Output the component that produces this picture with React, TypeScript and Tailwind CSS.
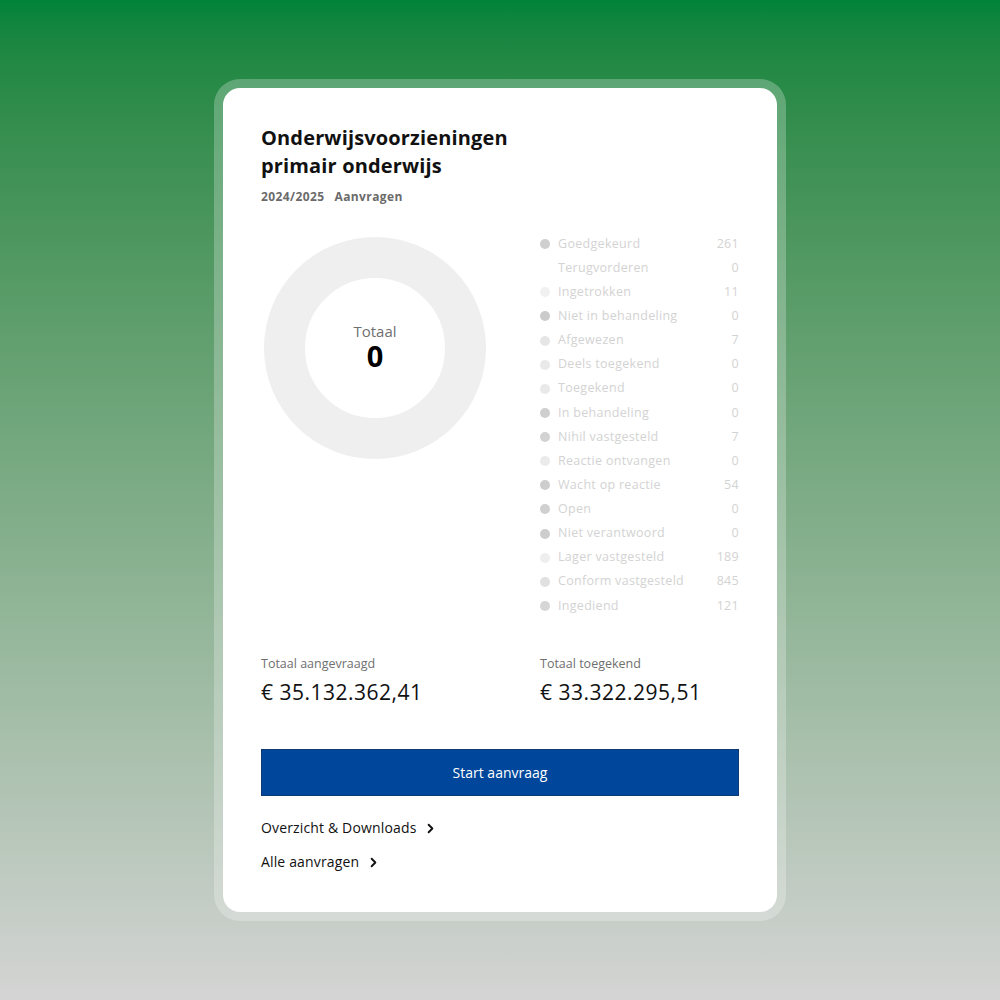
import React from "react";
import { ChevronRight } from "lucide-react";

const legend = [
  { label: "Goedgekeurd", value: 261, dot: "bg-[#cfcfcf]" },
  { label: "Terugvorderen", value: 0, dot: "bg-white" },
  { label: "Ingetrokken", value: 11, dot: "bg-[#f1f1f1]" },
  { label: "Niet in behandeling", value: 0, dot: "bg-[#cbcbcb]" },
  { label: "Afgewezen", value: 7, dot: "bg-[#e6e6e6]" },
  { label: "Deels toegekend", value: 0, dot: "bg-[#e9e9e9]" },
  { label: "Toegekend", value: 0, dot: "bg-[#e9e9e9]" },
  { label: "In behandeling", value: 0, dot: "bg-[#cecece]" },
  { label: "Nihil vastgesteld", value: 7, dot: "bg-[#d2d2d2]" },
  { label: "Reactie ontvangen", value: 0, dot: "bg-[#ebebeb]" },
  { label: "Wacht op reactie", value: 54, dot: "bg-[#cdcdcd]" },
  { label: "Open", value: 0, dot: "bg-[#d0d0d0]" },
  { label: "Niet verantwoord", value: 0, dot: "bg-[#cdcdcd]" },
  { label: "Lager vastgesteld", value: 189, dot: "bg-[#eeeeee]" },
  { label: "Conform vastgesteld", value: 845, dot: "bg-[#e0e0e0]" },
  { label: "Ingediend", value: 121, dot: "bg-[#d6d6d6]" },
];

const Donut: React.FC = () => (
  <div className="relative w-[222px] h-[222px] ml-[3px] mt-[5px]">
    <svg width="222" height="222" viewBox="0 0 222 222">
      <circle cx="111" cy="111" r="90.5" fill="none" stroke="#efefef" strokeWidth="41" />
    </svg>
    <div className="absolute inset-0 flex flex-col items-center justify-center pb-[2px]">
      <span className="text-[15px] leading-[17px] text-[#6f6f6f]">Totaal</span>
      <span className="mt-[1px] text-[29px] leading-[30px] font-bold text-black">0</span>
    </div>
  </div>
);

const App: React.FC = () => {
  return (
    <div
      className="h-[1000px] w-full flex items-center justify-center bg-gradient-to-b from-[#00833a] to-[#d4d4d4]"
      style={{ fontFamily: '"Open Sans", "Noto Sans", sans-serif' }}
    >
      <div className="p-[9px] rounded-[26px] bg-white/25">
        <div className="w-[554px] h-[824px] bg-white rounded-[17px] px-[38px] pt-[36px]">
          <h2 className="text-[20px] leading-[28px] font-bold text-[#111] tracking-[0.15px]">
            Onderwijsvoorzieningen
            <br />
            primair onderwijs
          </h2>
          <div className="mt-[9px] flex gap-[10px] text-[12px] leading-[16px] font-bold text-[#6b6b6b] tracking-[0.4px]">
            <span>2024/2025</span>
            <span>Aanvragen</span>
          </div>

          <div className="mt-[27px] grid grid-cols-[279px_1fr]">
            <div>
              <Donut />
            </div>
            <ul>
              {legend.map((item) => (
                <li
                  key={item.label}
                  className="h-[24.13px] flex items-center text-[12.5px] tracking-[0.3px] text-[#d3d3d3]"
                >
                  <span className={`w-[10px] h-[10px] rounded-full ${item.dot}`} />
                  <span className="ml-[8px] flex-1">{item.label}</span>
                  <span>{item.value}</span>
                </li>
              ))}
            </ul>
          </div>

          <div className="mt-[38px] grid grid-cols-[279px_1fr]">
            <div>
              <div className="text-[12.5px] leading-[16px] text-[#6f6f6f]">Totaal aangevraagd</div>
              <div className="mt-[6px] text-[21px] leading-[28px] tracking-[0.5px] text-[#111]">€ 35.132.362,41</div>
            </div>
            <div>
              <div className="text-[12.5px] leading-[16px] text-[#6f6f6f]">Totaal toegekend</div>
              <div className="mt-[6px] text-[21px] leading-[28px] tracking-[0.5px] text-[#111]">€ 33.322.295,51</div>
            </div>
          </div>

          <button className="mt-[43px] w-full h-[47px] bg-[#00479b] border border-[#0b3b74] text-white text-[14px] font-medium">
            Start aanvraag
          </button>

          <div className="mt-[22px] flex flex-col gap-[14px]">
            <a className="flex items-center gap-[7px] text-[14px] leading-[20px] tracking-[0.15px] text-[#111]">
              Overzicht &amp; Downloads
              <ChevronRight size={15} strokeWidth={3} />
            </a>
            <a className="flex items-center gap-[7px] text-[14px] leading-[20px] tracking-[0.15px] text-[#111]">
              Alle aanvragen
              <ChevronRight size={15} strokeWidth={3} />
            </a>
          </div>
        </div>
      </div>
    </div>
  );
};

export default App;
